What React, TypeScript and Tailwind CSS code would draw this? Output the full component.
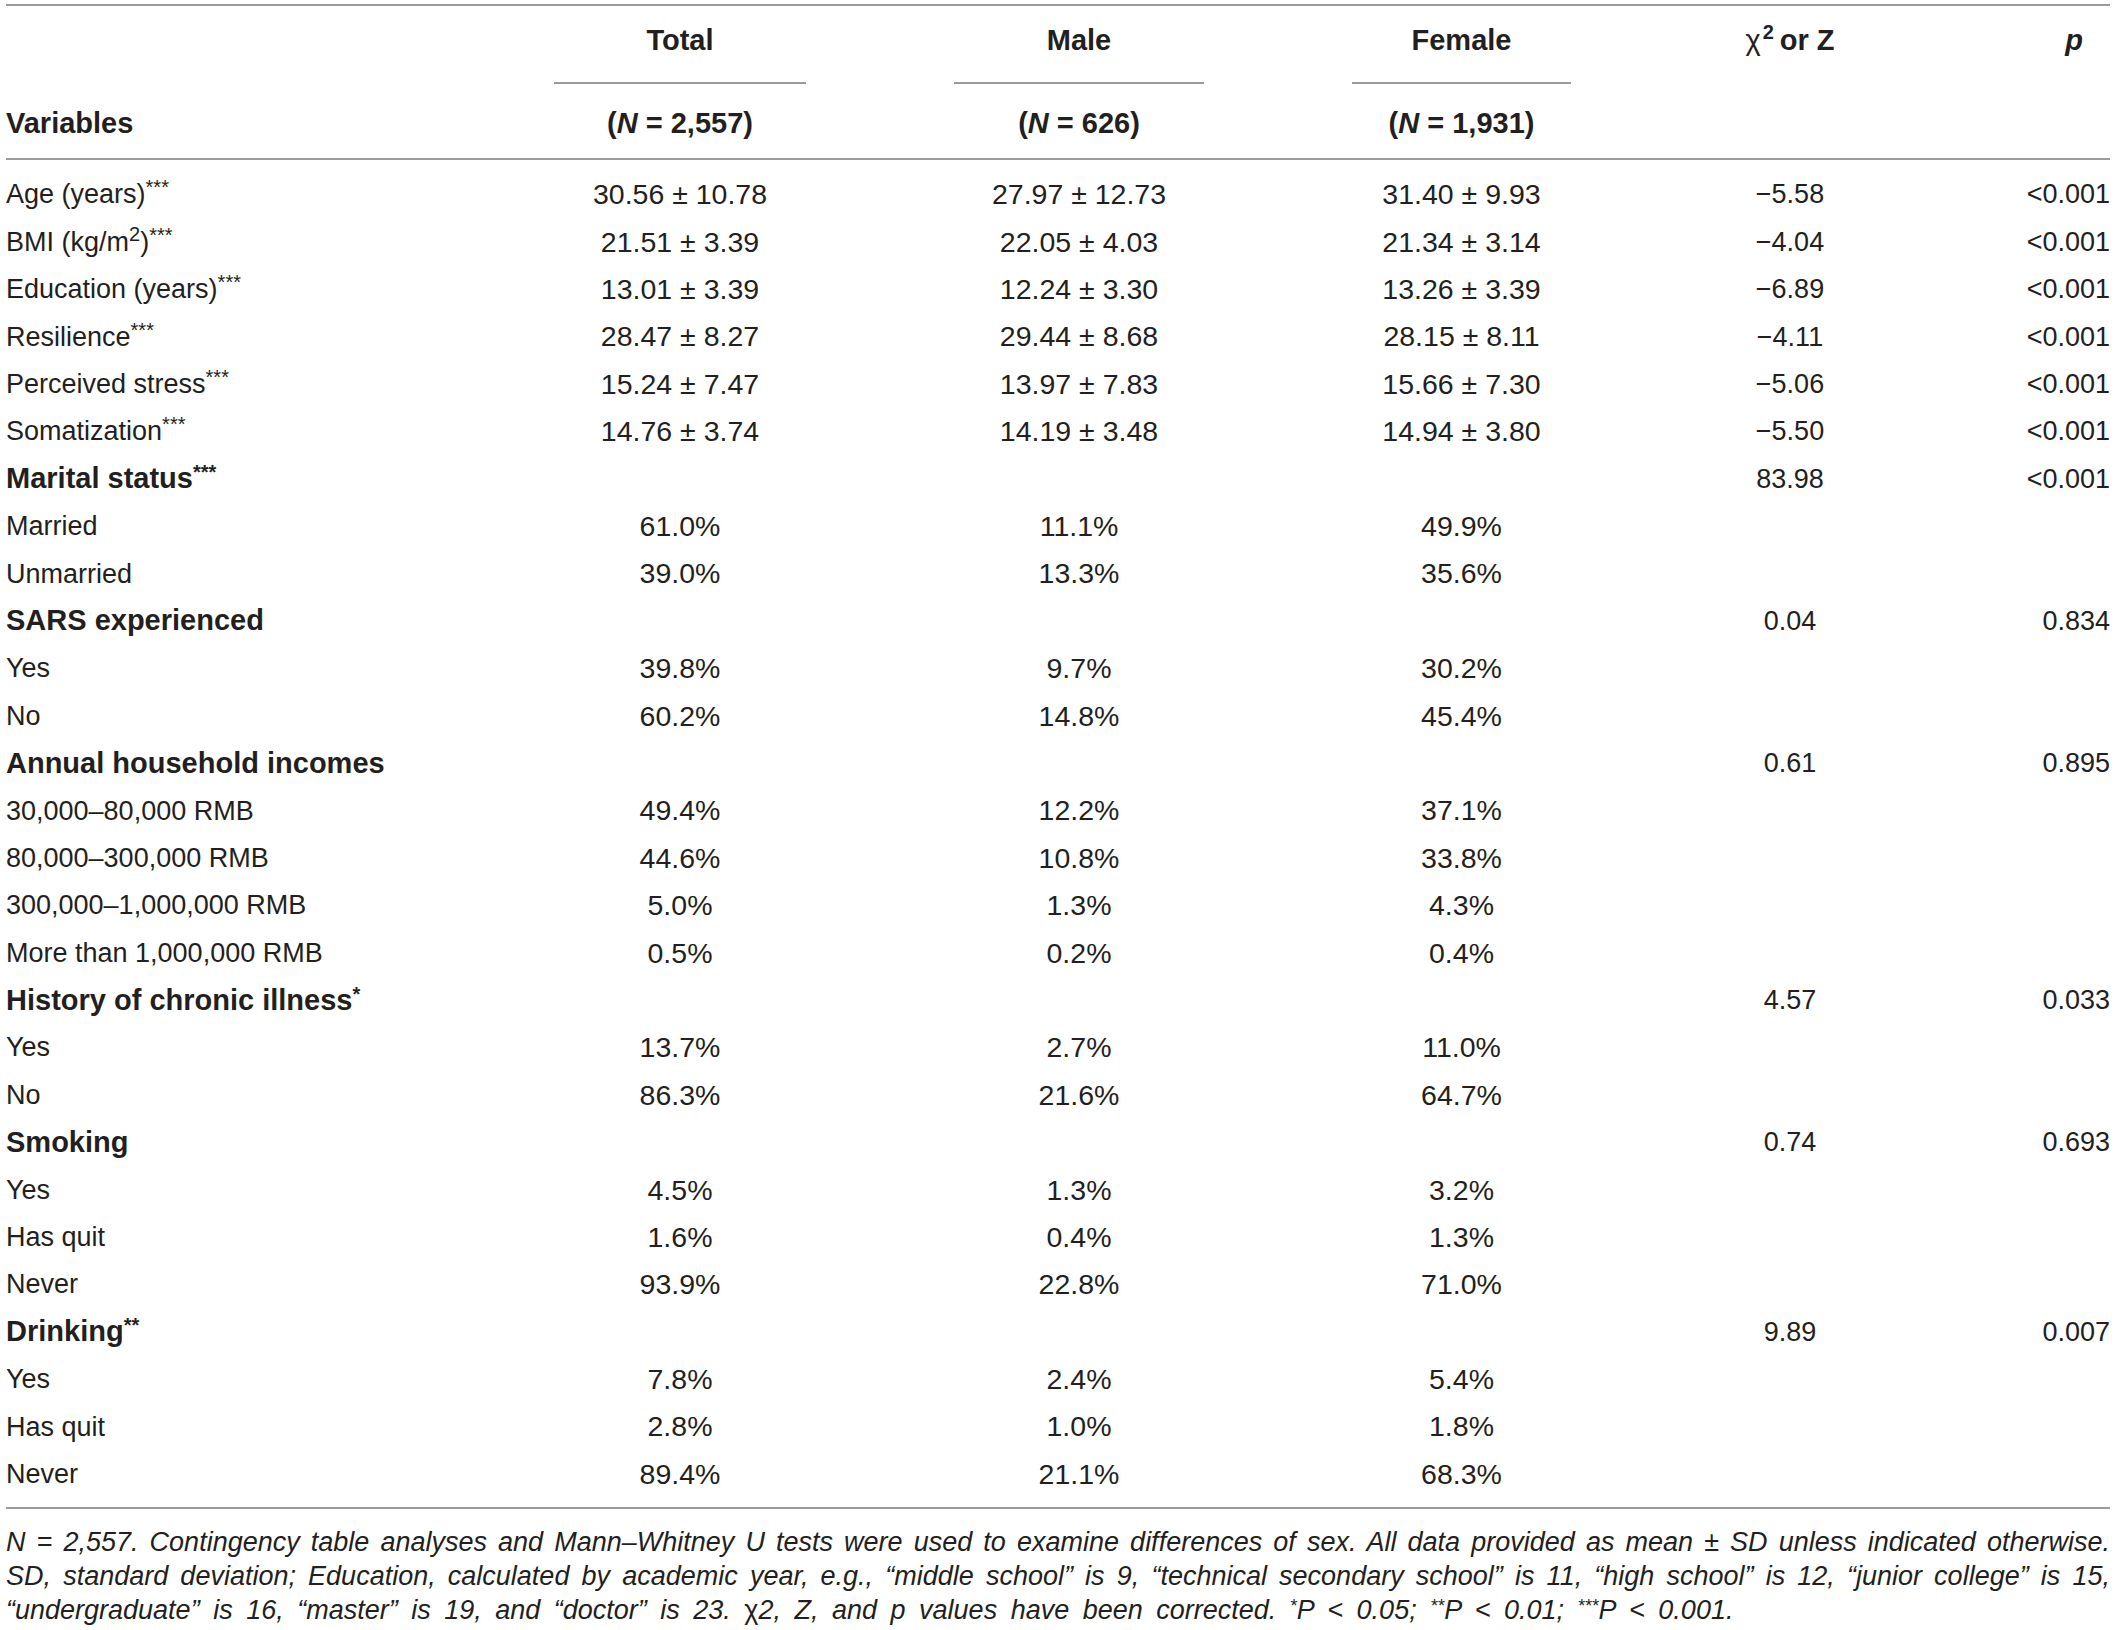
import React from "react";

type Row = {
  label: React.ReactNode;
  bold?: boolean;
  total?: string;
  male?: string;
  female?: string;
  stat?: string;
  p?: string;
};

const Stars = ({ n }: { n: string }) => <sup className="top-[-0.45em] text-[20px]">{n}</sup>;

const rows: Row[] = [
  { label: <>Age (years)<Stars n="***" /></>, total: "30.56 ± 10.78", male: "27.97 ± 12.73", female: "31.40 ± 9.93", stat: "−5.58", p: "<0.001" },
  {
    label: (
      <>
        BMI (kg/m<sup className="top-[-0.5em] text-[20px]">2</sup>)<Stars n="***" />
      </>
    ),
    total: "21.51 ± 3.39",
    male: "22.05 ± 4.03",
    female: "21.34 ± 3.14",
    stat: "−4.04",
    p: "<0.001",
  },
  { label: <>Education (years)<Stars n="***" /></>, total: "13.01 ± 3.39", male: "12.24 ± 3.30", female: "13.26 ± 3.39", stat: "−6.89", p: "<0.001" },
  { label: <>Resilience<Stars n="***" /></>, total: "28.47 ± 8.27", male: "29.44 ± 8.68", female: "28.15 ± 8.11", stat: "−4.11", p: "<0.001" },
  { label: <>Perceived stress<Stars n="***" /></>, total: "15.24 ± 7.47", male: "13.97 ± 7.83", female: "15.66 ± 7.30", stat: "−5.06", p: "<0.001" },
  { label: <>Somatization<Stars n="***" /></>, total: "14.76 ± 3.74", male: "14.19 ± 3.48", female: "14.94 ± 3.80", stat: "−5.50", p: "<0.001" },
  { label: <>Marital status<Stars n="***" /></>, bold: true, stat: "83.98", p: "<0.001" },
  { label: "Married", total: "61.0%", male: "11.1%", female: "49.9%" },
  { label: "Unmarried", total: "39.0%", male: "13.3%", female: "35.6%" },
  { label: "SARS experienced", bold: true, stat: "0.04", p: "0.834" },
  { label: "Yes", total: "39.8%", male: "9.7%", female: "30.2%" },
  { label: "No", total: "60.2%", male: "14.8%", female: "45.4%" },
  { label: "Annual household incomes", bold: true, stat: "0.61", p: "0.895" },
  { label: "30,000–80,000 RMB", total: "49.4%", male: "12.2%", female: "37.1%" },
  { label: "80,000–300,000 RMB", total: "44.6%", male: "10.8%", female: "33.8%" },
  { label: "300,000–1,000,000 RMB", total: "5.0%", male: "1.3%", female: "4.3%" },
  { label: "More than 1,000,000 RMB", total: "0.5%", male: "0.2%", female: "0.4%" },
  { label: <>History of chronic illness<Stars n="*" /></>, bold: true, stat: "4.57", p: "0.033" },
  { label: "Yes", total: "13.7%", male: "2.7%", female: "11.0%" },
  { label: "No", total: "86.3%", male: "21.6%", female: "64.7%" },
  { label: "Smoking", bold: true, stat: "0.74", p: "0.693" },
  { label: "Yes", total: "4.5%", male: "1.3%", female: "3.2%" },
  { label: "Has quit", total: "1.6%", male: "0.4%", female: "1.3%" },
  { label: "Never", total: "93.9%", male: "22.8%", female: "71.0%" },
  { label: <>Drinking<Stars n="**" /></>, bold: true, stat: "9.89", p: "0.007" },
  { label: "Yes", total: "7.8%", male: "2.4%", female: "5.4%" },
  { label: "Has quit", total: "2.8%", male: "1.0%", female: "1.8%" },
  { label: "Never", total: "89.4%", male: "21.1%", female: "68.3%" },
];

const cols = "grid grid-cols-[474px_400px_398px_367px_290px_175px]";

function GroupHead({ title }: { title: string }) {
  return (
    <div className="flex flex-col">
      <div className="flex h-[70px] items-center justify-center font-bold">{title}</div>
      <div className="mx-[74px] mt-[6px] h-[2px] bg-[#9b9b9b]" />
    </div>
  );
}

function NHead({ n }: { n: string }) {
  return (
    <div className="flex h-[74px] items-center justify-center pt-[6px] font-bold">
      (<span className="italic">N</span>&nbsp;=&nbsp;{n})
    </div>
  );
}

export default function App() {
  return (
    <div className="min-h-[1630px] w-[2118px] bg-white pl-[6px] pt-[4px] text-[27px] text-[#231f20] [font-family:'Liberation_Sans',Arial,sans-serif]">
      <div className="w-[2104px]">
        <div className="h-[2px] bg-[#9b9b9b]" />

        {/* header */}
        <div className={`${cols} text-[29px]`}>
          <div />
          <GroupHead title="Total" />
          <GroupHead title="Male" />
          <GroupHead title="Female" />
          <div className="flex h-[70px] items-center justify-center font-bold">
            <span className="font-normal">χ</span>
            <sup className="top-[-0.45em] ml-[2px] text-[20px]">2</sup>
            <span className="ml-[6px]">or Z</span>
          </div>
          <div className="flex h-[70px] items-center justify-end pr-[27px] font-bold italic">p</div>

          <div className="flex h-[74px] items-center pt-[6px] font-bold">Variables</div>
          <NHead n="2,557" />
          <NHead n="626" />
          <NHead n="1,931" />
          <div />
          <div />
        </div>
        <div className="h-[2px] bg-[#9b9b9b]" />

        {/* body */}
        <div className="pb-[9px] pt-[11px]">
          {rows.map((r, i) => (
            <div key={i} className={`${cols} h-[47.4px] items-center`}>
              <div className={r.bold ? "text-[29px] font-bold" : ""}>{r.label}</div>
              <div className="text-center text-[28.5px]">{r.total}</div>
              <div className="text-center text-[28.5px]">{r.male}</div>
              <div className="text-center text-[28.5px]">{r.female}</div>
              <div className="text-center">{r.stat}</div>
              <div className="text-right">{r.p}</div>
            </div>
          ))}
        </div>
        <div className="h-[2px] bg-[#9b9b9b]" />

        {/* footnote */}
        <div className="pt-[16px] text-[27px] italic leading-[34px]">
          <div className="[text-align-last:justify]">
            N = 2,557. Contingency table analyses and Mann–Whitney U tests were used to examine differences of sex. All
            data provided as mean ± SD unless indicated otherwise.
          </div>
          <div className="[text-align-last:justify]">
            SD, standard deviation; Education, calculated by academic year, e.g., “middle school” is 9, “technical
            secondary school” is 11, “high school” is 12, “junior college” is 15,
          </div>
          <div className="[word-spacing:6px]">
            “undergraduate” is 16, “master” is 19, and “doctor” is 23. <span className="not-italic">χ</span>2, Z, and p
            values have been corrected. <sup className="top-[-0.4em] text-[18px]">*</sup>P &lt; 0.05;{" "}
            <sup className="top-[-0.4em] text-[18px]">**</sup>P &lt; 0.01;{" "}
            <sup className="top-[-0.4em] text-[18px]">***</sup>P &lt; 0.001.
          </div>
        </div>
      </div>
    </div>
  );
}
